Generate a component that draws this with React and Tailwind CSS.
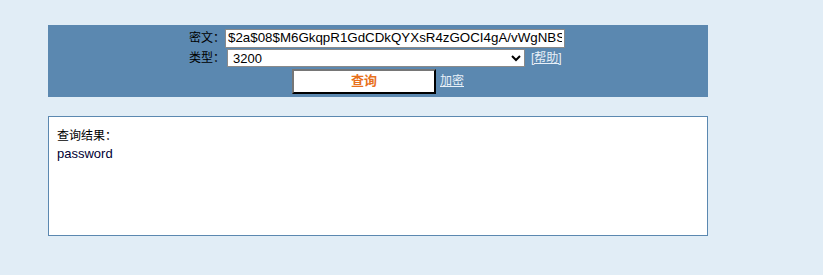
import React, { useState } from 'react';

const App = () => {
  const [hash, setHash] = useState('$2a$08$M6GkqpR1GdCDkQYXsR4zGOCI4gA/vWgNBS');
  const [type, setType] = useState('3200');

  return (
    <div className="min-h-[275px] bg-[#e1edf6] pt-[25px] pl-[48px] font-['Liberation_Sans','Noto_Sans_CJK_SC',sans-serif] text-[13px] text-black">
      {/* query form */}
      <div className="w-[660px] bg-[#5b88b0] pt-[3px] pb-[3px] flex flex-col items-center">
        <div className="flex items-center h-[20px] w-[374px]">
          <span className="w-[34px] flex justify-end whitespace-nowrap text-[12px]">密文：</span>
          <input
            value={hash}
            onChange={(e) => setHash(e.target.value)}
            className="w-[340px] h-[19px] bg-white border border-[#8a8a8a] px-[2px] text-[13.33px] outline-none"
          />
        </div>
        <div className="flex items-center h-[20px] w-[374px]">
          <span className="w-[34px] flex justify-end whitespace-nowrap text-[12px]">类型：</span>
          <select
            value={type}
            onChange={(e) => setType(e.target.value)}
            className="ml-[2px] w-[298px] h-[18px] bg-white border border-[#8a8a8a] px-[1px] text-[13px] outline-none"
          >
            <option value="3200">3200</option>
          </select>
          <a href="#" className="ml-[6px] text-[12px] text-[#e8f0f8] underline whitespace-nowrap">[帮助]</a>
        </div>
        <div className="flex items-center h-[26px]">
          <button className="w-[144px] h-[25px] bg-white border-2 border-t-[#767676] border-l-[#767676] border-r-black border-b-black text-[13px] font-bold text-[#e8711c]">
            查询
          </button>
          <a href="#" className="ml-[4px] text-[12px] text-[#e8f0f8] underline">加密</a>
        </div>
      </div>

      {/* result */}
      <div className="mt-[19px] w-[660px] h-[120px] bg-white border border-[#5b88b0] px-[8px] pt-[10px]">
        <div className="text-[12px] leading-[18px]">查询结果：</div>
        <div className="text-[13px] leading-[18px] text-[#000033]">password</div>
      </div>
    </div>
  );
};

export default App;
